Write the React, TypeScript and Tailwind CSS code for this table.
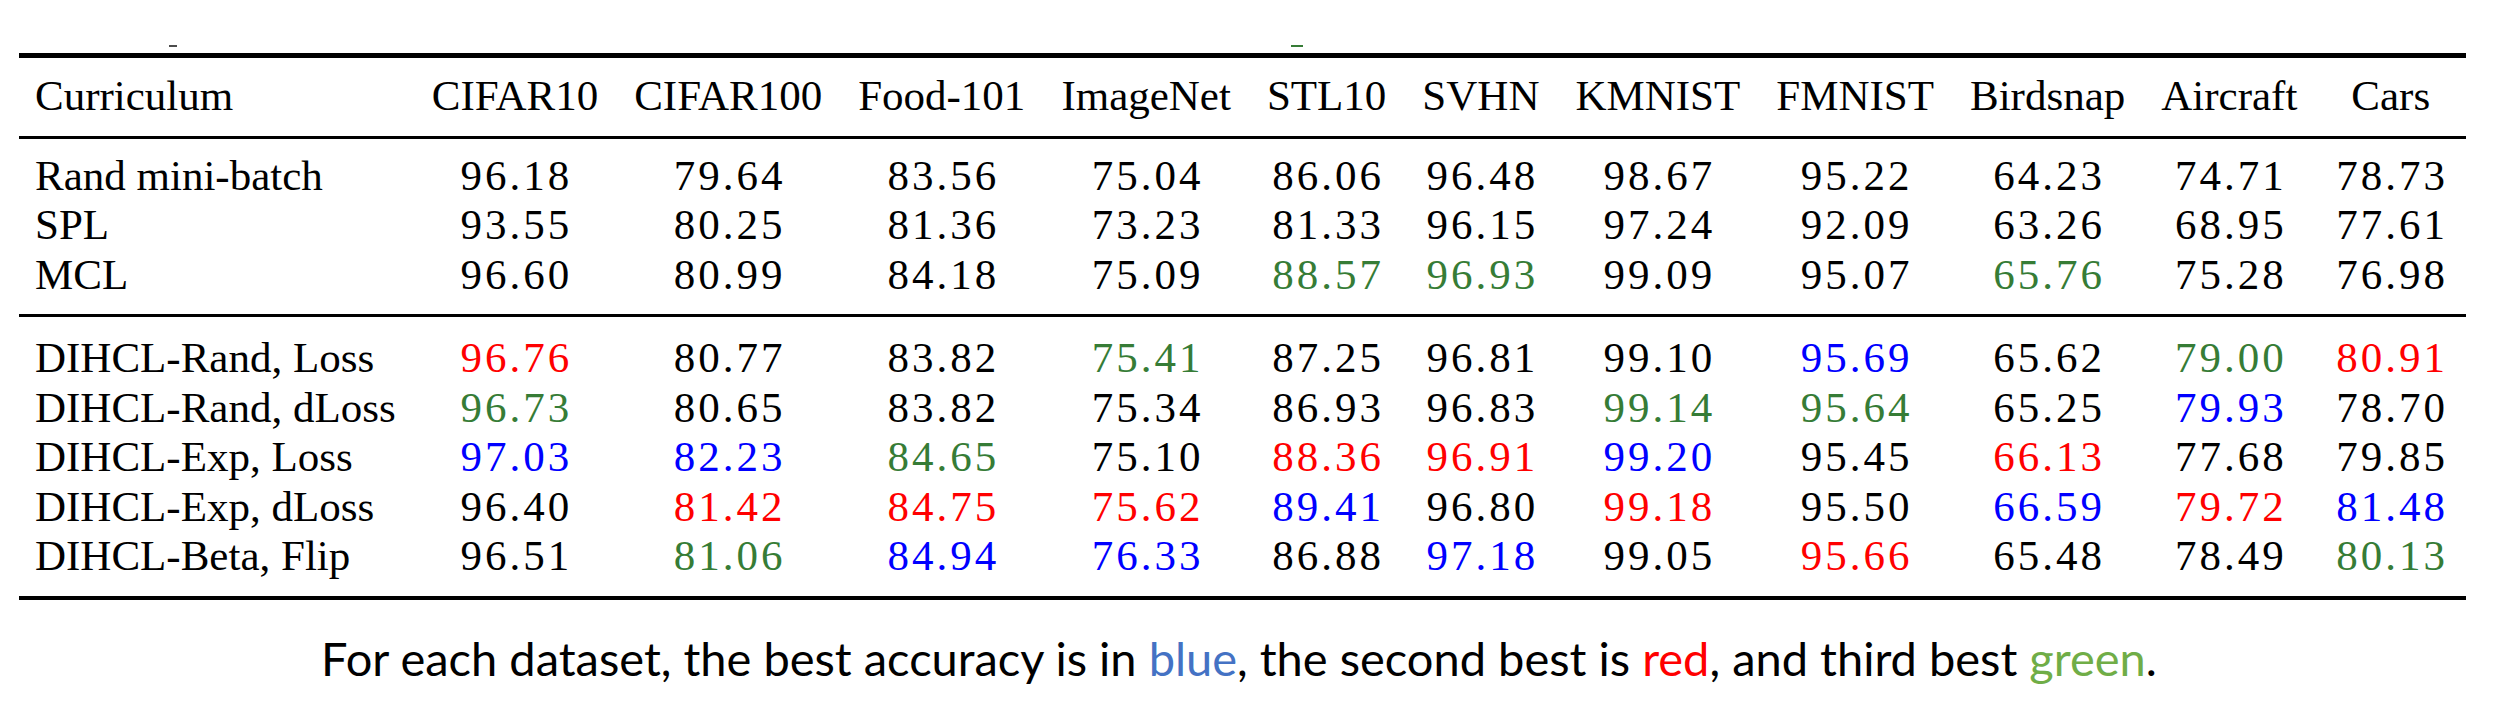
const columns = [
  "CIFAR10",
  "CIFAR100",
  "Food-101",
  "ImageNet",
  "STL10",
  "SVHN",
  "KMNIST",
  "FMNIST",
  "Birdsnap",
  "Aircraft",
  "Cars",
];

// k = black, b = best, r = second, g = third
type Cell = [string, "k" | "b" | "r" | "g"];

const baseline: { name: string; cells: Cell[] }[] = [
  {
    name: "Rand mini-batch",
    cells: [["96.18", "k"], ["79.64", "k"], ["83.56", "k"], ["75.04", "k"], ["86.06", "k"], ["96.48", "k"], ["98.67", "k"], ["95.22", "k"], ["64.23", "k"], ["74.71", "k"], ["78.73", "k"]],
  },
  {
    name: "SPL",
    cells: [["93.55", "k"], ["80.25", "k"], ["81.36", "k"], ["73.23", "k"], ["81.33", "k"], ["96.15", "k"], ["97.24", "k"], ["92.09", "k"], ["63.26", "k"], ["68.95", "k"], ["77.61", "k"]],
  },
  {
    name: "MCL",
    cells: [["96.60", "k"], ["80.99", "k"], ["84.18", "k"], ["75.09", "k"], ["88.57", "g"], ["96.93", "g"], ["99.09", "k"], ["95.07", "k"], ["65.76", "g"], ["75.28", "k"], ["76.98", "k"]],
  },
];

const dihcl: { name: string; cells: Cell[] }[] = [
  {
    name: "DIHCL-Rand, Loss",
    cells: [["96.76", "r"], ["80.77", "k"], ["83.82", "k"], ["75.41", "g"], ["87.25", "k"], ["96.81", "k"], ["99.10", "k"], ["95.69", "b"], ["65.62", "k"], ["79.00", "g"], ["80.91", "r"]],
  },
  {
    name: "DIHCL-Rand, dLoss",
    cells: [["96.73", "g"], ["80.65", "k"], ["83.82", "k"], ["75.34", "k"], ["86.93", "k"], ["96.83", "k"], ["99.14", "g"], ["95.64", "g"], ["65.25", "k"], ["79.93", "b"], ["78.70", "k"]],
  },
  {
    name: "DIHCL-Exp, Loss",
    cells: [["97.03", "b"], ["82.23", "b"], ["84.65", "g"], ["75.10", "k"], ["88.36", "r"], ["96.91", "r"], ["99.20", "b"], ["95.45", "k"], ["66.13", "r"], ["77.68", "k"], ["79.85", "k"]],
  },
  {
    name: "DIHCL-Exp, dLoss",
    cells: [["96.40", "k"], ["81.42", "r"], ["84.75", "r"], ["75.62", "r"], ["89.41", "b"], ["96.80", "k"], ["99.18", "r"], ["95.50", "k"], ["66.59", "b"], ["79.72", "r"], ["81.48", "b"]],
  },
  {
    name: "DIHCL-Beta, Flip",
    cells: [["96.51", "k"], ["81.06", "g"], ["84.94", "b"], ["76.33", "b"], ["86.88", "k"], ["97.18", "b"], ["99.05", "k"], ["95.66", "r"], ["65.48", "k"], ["78.49", "k"], ["80.13", "g"]],
  },
];

const tone = {
  k: "text-black",
  b: "text-[#0000ff]",
  r: "text-[#ff0000]",
  g: "text-[#367c36]",
};

// pad: vertical padding for the row (first row of a group / last row before a rule)
function Row({ name, cells, pad, rule }: { name: string; cells: Cell[]; pad: string; rule?: boolean }) {
  return (
    <tr className={rule ? "border-b-[3px] border-black" : ""}>
      <td className={`pl-[16px] pr-[18px] text-left whitespace-nowrap ${pad}`}>{name}</td>
      {cells.map(([v, c], i) => (
        <td key={i} className={`pl-[21px] pr-[18px] text-center whitespace-nowrap tracking-[3px] ${tone[c]} ${pad}`}>
          {v}
        </td>
      ))}
    </tr>
  );
}

function padFor(i: number, n: number, top: string, bottom: string) {
  if (i === 0) return top;
  if (i === n - 1) return bottom;
  return "";
}

export default function App() {
  return (
    <div className="w-[2500px] h-[712px] bg-white overflow-hidden">
      <div className="w-[2440px] ml-[19px]">
        <div className="flex h-[53px] items-end pb-[6px]">
          <span className="ml-[150px] h-[2px] w-[8px] bg-black/70" />
          <span className="ml-[1114px] h-[2px] w-[12px] bg-[#367c36]" />
        </div>
        <table
          className="w-[2440px] border-collapse border-t-[5px] border-b-[4px] border-black text-[43px] leading-[49.5px] text-black"
          style={{ fontFamily: '"Liberation Serif", "Times New Roman", serif' }}
        >
          <thead>
            <tr className="border-b-[3px] border-black">
              <th className="pl-[16px] pr-[18px] pt-[13px] pb-[15px] text-left font-normal whitespace-nowrap">Curriculum</th>
              {columns.map((c) => (
                <th key={c} className="px-[18px] pt-[13px] pb-[15px] text-center font-normal whitespace-nowrap">
                  {c}
                </th>
              ))}
            </tr>
          </thead>
          <tbody>
            {baseline.map((r, i) => (
              <Row
                key={r.name}
                {...r}
                pad={padFor(i, baseline.length, "pt-[12px]", "pb-[15px]")}
                rule={i === baseline.length - 1}
              />
            ))}
            {dihcl.map((r, i) => (
              <Row key={r.name} {...r} pad={padFor(i, dihcl.length, "pt-[16px]", "pb-[15px]")} />
            ))}
          </tbody>
        </table>
        <p
          className="mt-[28px] text-center text-[47px] leading-[60px] text-black"
          style={{ fontFamily: 'Lato, "Open Sans", sans-serif' }}
        >
          For each dataset, the best accuracy is in <span className="text-[#4472c4]">blue</span>, the second best is{" "}
          <span className="text-[#ff0000]">red</span>, and third best <span className="text-[#70ad47]">green</span>.
        </p>
      </div>
    </div>
  );
}
